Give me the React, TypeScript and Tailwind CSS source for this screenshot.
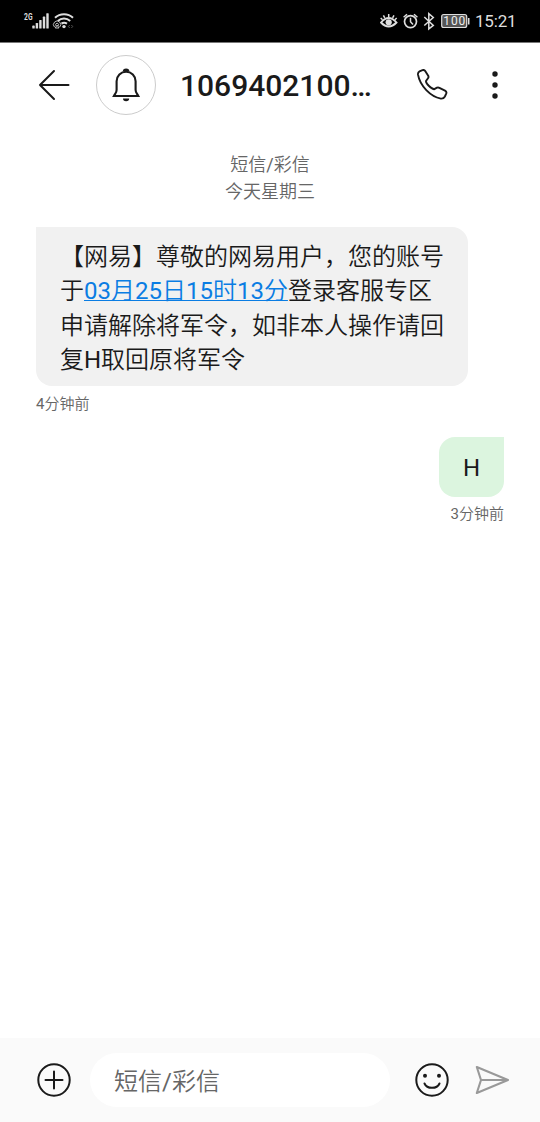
import React from "react";

function StatusBar() {
  return (
    <div className="flex h-[43px] shrink-0 items-center border-b border-[#777777] bg-black text-[#dedede]">
      <svg className="h-[42px] w-[80px]" viewBox="0 0 80 42" fill="none">
        <text x="24" y="20" fontSize="8.5" fontWeight="700" fill="#dedede" textLength="8.5" lengthAdjust="spacingAndGlyphs">2G</text>
        <g fill="#dedede">
          <rect x="32.3" y="25.6" width="2.4" height="3" rx=".6" />
          <rect x="35.7" y="23" width="2.4" height="5.6" rx=".6" />
          <rect x="39.2" y="20" width="2.4" height="8.6" rx=".6" />
          <rect x="42.8" y="16.6" width="2.4" height="12" rx=".6" />
          <rect x="46.3" y="13.2" width="2.4" height="15.4" rx=".6" />
          <circle cx="64" cy="26.6" r="1.7" />
        </g>
        <g stroke="#dedede" strokeWidth="2">
          <path d="M55 17.8C60 13 68 13 73 17.8" />
          <path d="M57.8 21C61.5 17.6 66.5 17.6 70.2 21" />
          <path d="M61.5 23.6Q64 21.7 67 23.6" />
        </g>
        <g stroke="#bdbdbd" strokeWidth="1">
          <path d="M54.6 27.2A3.6 3.6 0 1 1 59.6 27.2M56 25.8A1.5 1.5 0 1 1 58.2 25.8M57.1 25l-1.8 3h3.6z" />
        </g>
        <path d="M69.7 25l-1.3 1.5 1.3 1.5M71.4 25l1.3 1.5-1.3 1.5" stroke="#666" strokeWidth=".8" />
      </svg>
      <svg className="ml-[300px] h-[42px] w-[92px]" viewBox="380 0 92 42" fill="none" stroke="#dedede">
        <path d="M381 22.5Q388.700 13.500 396.500 22.500Q388.700 30.500 381 22.500Z" strokeWidth="1.9" />
        <circle cx="388.700" cy="22.300" r="3.100" fill="#dedede" stroke="none" />
        <path d="M388.700 14v3M383.400 15.300l1.400 2.600M394 15.300l-1.400 2.600M380.700 18l1.800 1.700M396.700 18l-1.800 1.700" strokeWidth="1.500" />
        <circle cx="410.500" cy="21.600" r="6" strokeWidth="1.700" />
        <path d="M410.500 17.800v4l2.500 2.600M403.600 17.200l3.400-3M417.400 17.200l-3.400-3" strokeWidth="1.500" />
        <path d="M424.300 17l9 8.400-4.500 3.500V13.700l4.500 3.800-9 8" strokeWidth="1.500" />
        <rect x="441.700" y="14.500" width="25" height="13" rx="2" fill="#555" strokeWidth="1.200" />
        <path d="M468.700 18v6.500" strokeWidth="1.600" />
        <text x="443.300" y="25.200" fontSize="12" fontFamily="Roboto" fontWeight="400" fill="#eee" stroke="none" textLength="22">100</text>
      </svg>
      <span className="ml-[3px] text-[17px] leading-none tracking-[-0.2px]">15:21</span>
    </div>
  );
}

function Header() {
  return (
    <header className="flex h-[83px] shrink-0 items-center text-[#1a1a1a]">
      <svg className="ml-9 h-9 w-9" viewBox="0 0 36 36" fill="none" stroke="currentColor" strokeWidth="2" strokeLinecap="round" strokeLinejoin="round">
        <path d="M32.500 18H4M18 4L4 18l14 14" />
      </svg>
      <div className="ml-6 flex size-[60px] items-center justify-center rounded-full border-[1.500px] border-[#cccccc]">
        <svg className="h-9 w-9" viewBox="0 0 36 36" fill="none" stroke="currentColor" strokeWidth="2.100" strokeLinejoin="miter">
          <path d="M8.600 23V14.300a9.500 9.500 0 0 1 19 0V23c0 2.500 1.300 3.500 2.700 6H5.900c1.400-2.500 2.700-3.500 2.700-6z" />
          <path d="M14.800 4.500a3.300 3 0 0 1 6.600 0zM15 31.500a3.100 2.800 0 0 0 6.200 0z" fill="currentColor" stroke="none" />
        </svg>
      </div>
      <h1 className="ml-6 w-[212px] whitespace-nowrap pt-[3px] text-[30px] font-medium leading-9">1069402100…</h1>
      <svg className="ml-6 h-8 w-8" viewBox="416 68.500 32 32" fill="none" stroke="currentColor" strokeWidth="1.900" strokeLinejoin="round">
        <path d="M419.500 70.800L422.500 69.600C423.800 69.200 424.700 69.700 425.200 70.500L428.200 75.200C428.700 76.200 428.600 77 428 77.800L426 80.500C425.700 83 431.500 88.700 434.300 88.700L437 87.200C438 86.800 438.600 86.900 439.400 87.300L445 90.100C446.400 90.900 446.700 92 446.200 93.200L444.900 96C444 97.700 442.700 98.300 440.800 98.100C430.500 96 420 85.500 418 74.200C417.800 72.500 418.200 71.500 419.500 70.800Z" />
      </svg>
      <svg className="ml-[35px] h-9 w-6" viewBox="0 0 24 36" fill="currentColor">
        <circle cx="12" cy="7" r="2.700" /><circle cx="12" cy="18" r="2.700" /><circle cx="12" cy="29" r="2.700" />
      </svg>
    </header>
  );
}

function Composer() {
  return (
    <footer className="flex h-[84px] shrink-0 items-center bg-[#fafafa] text-[#1a1a1a]">
      <svg className="ml-9 h-9 w-9" viewBox="0 0 36 36" fill="none" stroke="currentColor" strokeWidth="2">
        <circle cx="18" cy="18" r="15.700" /><path d="M18 9.500v17M9.500 18h17" strokeLinecap="round" />
      </svg>
      <div className="ml-[18px] flex h-[54px] w-[300px] items-center rounded-full bg-white pl-6 text-2xl leading-none text-[#666666]">
        <span className="pt-[3px]">短信/彩信</span>
      </div>
      <svg className="ml-6 h-9 w-9" viewBox="0 0 36 36" fill="none" stroke="currentColor" strokeWidth="2">
        <circle cx="18" cy="18" r="15.700" />
        <path d="M10.500 21.500C13 27.300 23 27.300 25.500 21.500" strokeLinecap="round" />
        <g fill="currentColor" stroke="none"><circle cx="11" cy="13.800" r="2" /><circle cx="25" cy="13.800" r="2" /></g>
      </svg>
      <svg className="ml-6 h-9 w-9" viewBox="0 0 36 36" fill="none" stroke="#999999" strokeWidth="2.100" strokeLinejoin="round" strokeLinecap="round">
        <path d="M2.800 5L34 18L2.800 31L7 18ZM7 18H32" />
      </svg>
    </footer>
  );
}

export default function App() {
  return (
    <div className="flex h-[1122px] w-[540px] flex-col overflow-hidden bg-white font-['Roboto','Noto_Sans_CJK_SC_DemiLight','Noto_Sans_CJK_SC',sans-serif] font-normal" lang="zh-CN">
      <StatusBar />
      <Header />
      <main className="flex flex-1 flex-col px-9">
        <div className="mt-[25px] text-center text-[18px] leading-[27px] text-[#666666]">
          <p>短信/彩信</p>
          <p>今天星期三</p>
        </div>
        <div className="mt-[22px] h-[159px] w-[432px] rounded-[16px] rounded-tl-none bg-[#f1f1f1] pl-6 pt-[12.500px] text-2xl leading-[34.500px] whitespace-nowrap text-[#1a1a1a]">
          <p>【网易】尊敬的网易用户，您的账号</p>
          <p>于<span className="text-[#0a7de3] underline decoration-[1px] underline-offset-[1px] [text-decoration-skip-ink:none]">03月25日15时13分</span>登录客服专区</p>
          <p>申请解除将军令，如非本人操作请回</p>
          <p>复H取回原将军令</p>
        </div>
        <p className="mt-2 text-[15px] leading-5 text-[#666666]">4分钟前</p>
        <div className="mt-[23px] flex h-[60px] w-[65px] items-center justify-center self-end rounded-[16px] rounded-tr-none bg-[#dcf5df] pt-0.5 text-2xl text-[#1a1a1a]">H</div>
        <p className="mt-[7px] self-end text-[15px] leading-5 text-[#666666]">3分钟前</p>
      </main>
      <Composer />
    </div>
  );
}
